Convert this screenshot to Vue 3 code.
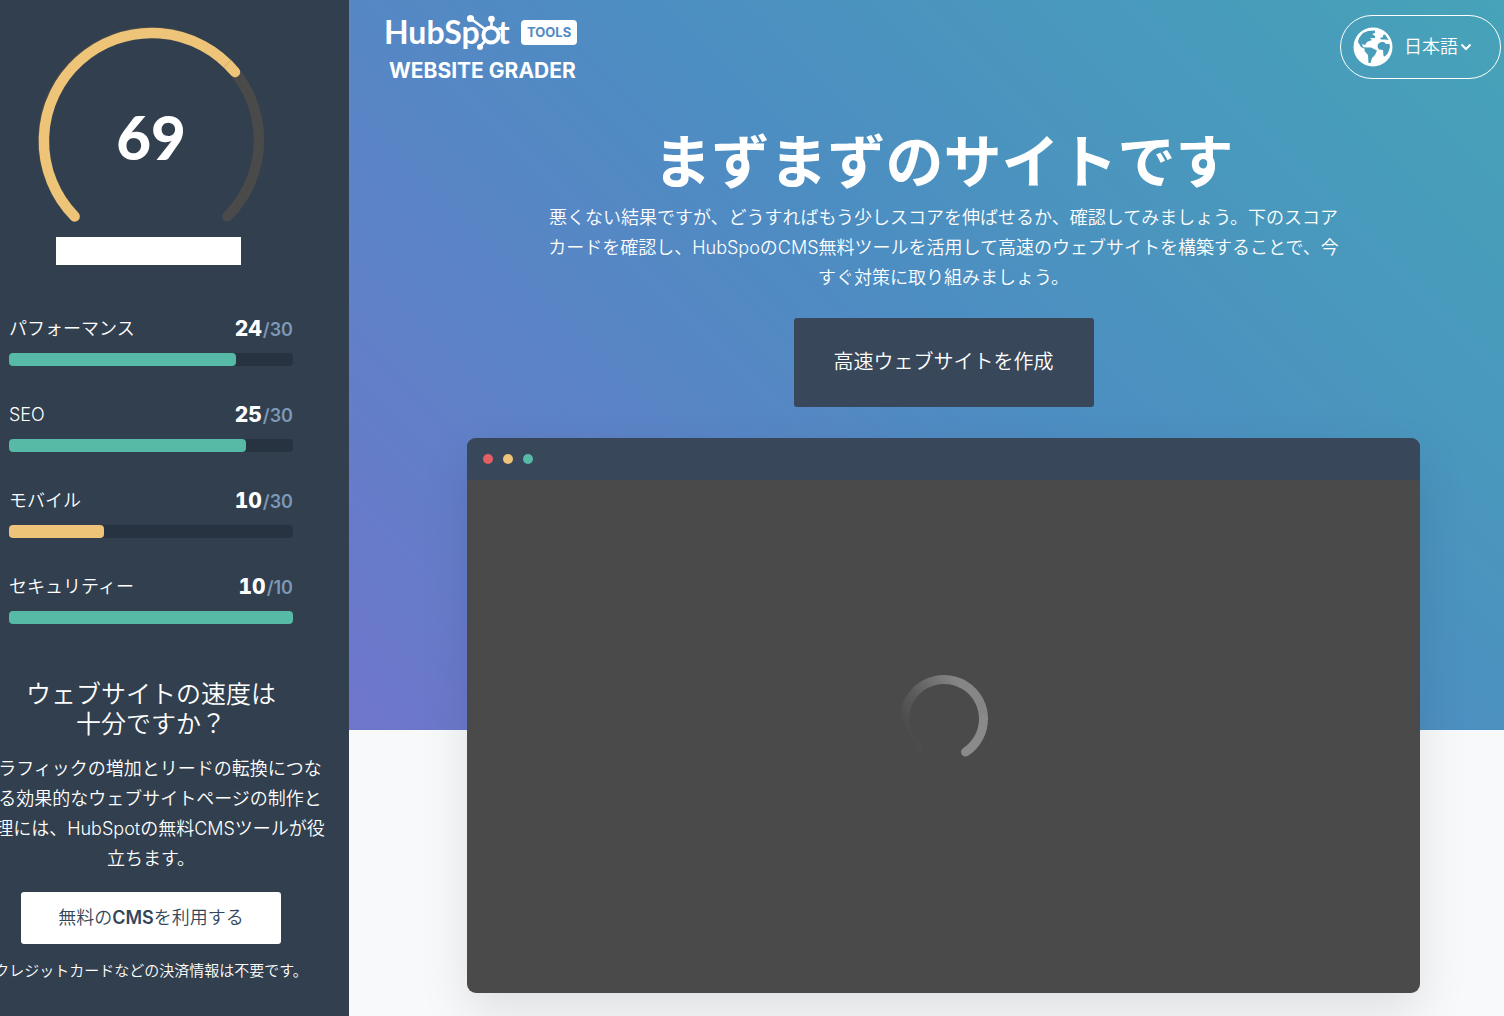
<script setup>
const metrics = [
  { label: 'パフォーマンス', score: 24, max: 30, tone: 'good' },
  { label: 'SEO', score: 25, max: 30, tone: 'good' },
  { label: 'モバイル', score: 10, max: 30, tone: 'fair' },
  { label: 'セキュリティー', score: 10, max: 10, tone: 'good' },
]
</script>

<template>
  <div class="page">
    <aside class="sidebar">
      <div class="gauge">
        <svg viewBox="0 0 228 198" width="228" height="198" aria-hidden="true">
          <g fill="none" stroke-width="10.5" stroke-linecap="round">
            <path d="M37.6 190.4A108 108 0 1 1 190.4 190.4" stroke="#4a4a4a" />
            <path d="M37.6 190.4A108 108 0 1 1 198 46" stroke="#edc478" />
          </g>
          <path d="M187 41L194 34" stroke="#d0ad6d" stroke-width="1" />
        </svg>
        <strong class="total">69</strong>
      </div>
      <div class="site"></div>

      <ul class="metrics">
        <li v-for="m in metrics" :key="m.label">
          <div class="row">
            <span>{{ m.label }}</span>
            <span class="points"><b>{{ m.score }}</b>/{{ m.max }}</span>
          </div>
          <div class="track">
            <div class="fill" :class="m.tone" :style="{ width: (m.score / m.max) * 100 + '%' }"></div>
          </div>
        </li>
      </ul>

      <h2>ウェブサイトの速度は<br />十分ですか？</h2>
      <p class="pitch">
        トラフィックの増加とリードの転換につな<br />がる効果的なウェブサイトページの制作と<br />管理には、HubSpotの無料CMSツールが役<br />立ちます。
      </p>
      <a class="cms" href="#">無料の<b>CMS</b>を利用する</a>
      <p class="note">クレジットカードなどの決済情報は不要です。</p>
    </aside>

    <main>
      <header>
        <a class="brand" href="#">
          <span class="brand-top">
            <svg viewBox="0 0 130 40" width="130" height="40">
              <text x="-2" y="32" class="wordmark">HubSp<tspan fill="none">o</tspan>t</text>
              <g stroke="#fff" fill="none" stroke-width="2.6">
                <circle cx="105" cy="23" r="7.6" stroke-width="4" />
                <path d="M84.5 6.5L99.5 17.5M105.5 7V15M94.5 34L100 28" />
              </g>
              <g fill="#fff">
                <circle cx="84.5" cy="6.5" r="3.6" />
                <circle cx="105.5" cy="7" r="3.3" />
                <circle cx="94" cy="35" r="3" />
              </g>
            </svg>
            <span class="tools">TOOLS</span>
          </span>
          <span class="product">WEBSITE GRADER</span>
        </a>
        <button class="lang" type="button">
          <svg viewBox="0 0 40 40" width="40" height="40" aria-hidden="true">
            <circle cx="20" cy="20" r="19.5" fill="#fff" />
            <g fill="#489dba">
              <path d="M6 11L10 6L15 4L22 3.5L22 6L19 7L22 9L22 11L17 11L19 13L14 15L12 18L9 17L10 20L14 21L13 22.5L8 20L5 15Z" />
              <path d="M12 20.5L18 20.5L24 23.5L22 28L19 31L17.5 36L15.5 36L15 28L11.5 24Z" />
              <path d="M30 8L32 7.5L35 12L35.500 13L32 12.500L28 12.500L27 11L30 10Z" />
              <path d="M25 17L28 15L31 15L33 17L36.5 17L37 20L35 26L32 29.5L30.5 29L30 23L26 22.5L24.5 20Z" />
            </g>
          </svg>
          <span>日本語</span>
          <svg class="caret" viewBox="0 0 12 8" width="12" height="8" aria-hidden="true">
            <path d="M1.5 1.5L6 6L10.5 1.5" fill="none" stroke="#fff" stroke-width="2" />
          </svg>
        </button>
      </header>

      <section class="hero">
        <h1>まずまずのサイトです</h1>
        <p>
          悪くない結果ですが、どうすればもう少しスコアを伸ばせるか、確認してみましょう。下のスコア<br />カードを確認し、HubSpoのCMS無料ツールを活用して高速のウェブサイトを構築することで、今<br />すぐ対策に取り組みましょう。
        </p>
        <a class="build" href="#">高速ウェブサイトを作成</a>
        <div class="browser">
          <div class="bar"><i class="red"></i><i class="yellow"></i><i class="green"></i></div>
          <div class="screen">
            <svg viewBox="0 0 90 90" width="90" height="90" aria-hidden="true">
              <defs>
                <linearGradient id="fade" gradientUnits="userSpaceOnUse" x1="18" y1="76" x2="78" y2="40">
                  <stop offset="0" stop-color="#4a4a4a" />
                  <stop offset=".35" stop-color="#5a5a5a" />
                  <stop offset="1" stop-color="#868686" />
                </linearGradient>
              </defs>
              <path d="M22 77A39.5 39.5 0 1 1 84.5 45" fill="none" stroke="url(#fade)" stroke-width="9" />
              <path d="M84.5 45A39.5 39.5 0 0 1 66.5 78" fill="none" stroke="#8a8a8a" stroke-width="9" stroke-linecap="round" />
            </svg>
          </div>
        </div>
      </section>
    </main>
  </div>
</template>

<style>
body {
  background: #f7f9fb;
}
</style>

<style scoped>
.page {
  display: flex;
  min-height: 100vh;
  overflow: hidden;
  font-family: Inter, "Noto Sans CJK JP", sans-serif;
  font-size: 18px;
  font-weight: 350;
  color: #fff;
}

h1,
h2,
p,
ul {
  margin: 0;
  padding: 0;
}

a {
  color: inherit;
  text-decoration: none;
}

.sidebar {
  box-sizing: border-box;
  flex: 0 0 349px;
  min-width: 0;
  display: flex;
  flex-direction: column;
  align-items: center;
  padding: 26px 56px 32px 9px;
  background: #323f4e;
  text-align: center;
}

.gauge {
  display: grid;
  place-items: center;
}

.gauge > * {
  grid-area: 1 / 1;
}

.gauge svg {
  display: block;
}

.total {
  padding-top: 24px;
  font: 900 60px/60px Lato, sans-serif;
}

.site {
  width: 185px;
  height: 28px;
  margin: 13px 5px 0 0;
  background: #fff;
}

.metrics {
  align-self: stretch;
  display: flex;
  flex-direction: column;
  gap: 34px;
  margin-top: 49px;
  list-style: none;
}

.row {
  display: flex;
  justify-content: space-between;
  height: 30px;
  line-height: 30px;
}

.points {
  font-weight: 600;
  color: #7c98b6;
}

.points b {
  margin-right: 1px;
  font-size: 21px;
  font-weight: 800;
  font-variant-numeric: tabular-nums;
  color: #fff;
}

.track {
  height: 13px;
  margin-top: 9px;
  border-radius: 4px;
  background: #273341;
}

.fill {
  height: 100%;
  border-radius: 4px;
}

.good {
  background: #56baa7;
}

.fair {
  background: #edc478;
}

h2 {
  margin-top: 55px;
  font-size: 25px;
  font-weight: 350;
  line-height: 30px;
  white-space: nowrap;
}

.pitch {
  margin-top: 15px;
  line-height: 30px;
  white-space: nowrap;
}

.cms {
  padding: 0 37px;
  margin-top: 18px;
  border-radius: 3px;
  background: #fff;
  color: #33475b;
  line-height: 52px;
  white-space: nowrap;
}

.cms b {
  font-weight: 600;
}

.note {
  margin-top: 16px;
  font-size: 15px;
  line-height: 22px;
  white-space: nowrap;
}

main {
  flex: 1;
  min-width: 0;
  background: #f7f9fb linear-gradient(45deg, #6f76cc, #4d8dc2 52%, #46a3b8) no-repeat 0 0 / 100% 730px;
}

header {
  display: flex;
  justify-content: space-between;
  align-items: flex-start;
  padding: 12px 3px 0 37px;
}

.brand {
  display: flex;
  flex-direction: column;
}

.brand-top {
  display: flex;
  align-items: center;
  gap: 5px;
}

.brand-top svg {
  overflow: visible;
}

.wordmark {
  font: 700 32px/40px Lato, sans-serif;
  fill: #fff;
}

.tools {
  padding: 0 6px;
  border-radius: 4px;
  background: #fff;
  color: #5089c4;
  font-size: 13px;
  font-weight: 700;
  line-height: 25px;
}

.product {
  margin-left: 3px;
  font-size: 21px;
  font-weight: 700;
  line-height: 38px;
}

.lang {
  box-sizing: border-box;
  display: flex;
  align-items: center;
  width: 161px;
  height: 64px;
  margin-top: 3px;
  padding: 0 12px;
  border: 1px solid #fff;
  border-radius: 32px;
  background: none;
  color: #fff;
  font: 350 18px "Noto Sans CJK JP", sans-serif;
}

.lang span {
  margin: 0 2px 4px 11px;
}

.hero {
  display: flex;
  flex-direction: column;
  align-items: center;
  padding: 0 84px 23px 118px;
  text-align: center;
}

h1 {
  margin-top: 34px;
  font-size: 58px;
  font-weight: 700;
  line-height: 76px;
  white-space: nowrap;
}

.hero p {
  margin-top: 3px;
  line-height: 30px;
  white-space: nowrap;
}

.build {
  padding: 0 40px;
  margin-top: 25px;
  border-radius: 3px;
  background: #38475a;
  font-size: 20px;
  line-height: 89px;
}

.browser {
  align-self: stretch;
  margin-top: 31px;
  border-radius: 9px;
  overflow: hidden;
  background: #4a4a4a;
  box-shadow: 0 20px 50px rgba(0, 0, 0, 0.1);
}

.bar {
  display: flex;
  align-items: center;
  gap: 10px;
  height: 42px;
  padding-left: 16px;
  background: #38475a;
}

.bar i {
  width: 10px;
  height: 10px;
  border-radius: 50%;
}

.red {
  background: #e35f63;
}

.yellow {
  background: #edc478;
}

.green {
  background: #56baa7;
}

.screen {
  box-sizing: border-box;
  display: grid;
  place-items: center;
  height: 513px;
  padding-bottom: 36px;
}
</style>
